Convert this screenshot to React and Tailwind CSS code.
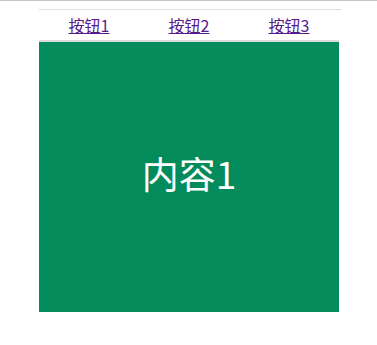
import React from 'react';

const tabs = ['按钮1', '按钮2', '按钮3'];

export default function App() {
  return (
    <div className="min-h-[345px] bg-white" style={{ fontFamily: '"Microsoft YaHei", "Noto Sans CJK SC", sans-serif' }}>
      {/* top rule */}
      <div className="h-px bg-[#c4c4c4]" />

      <div className="ml-[39px] mt-2 w-[302px] border-t border-[#dddddd]">
        {/* Tabs */}
        <div className="grid grid-cols-3 w-[300px]">
          {tabs.map((t) => (
            <a
              key={t}
              href="#"
              className="h-[30px] leading-[30px] text-center text-base text-[#551a8b] underline"
            >
              {t}
            </a>
          ))}
        </div>

        {/* Content panel */}
        <div className="w-[300px] h-[272px] border-t-2 border-[#dddddd] bg-[#038b5b] flex items-center justify-center">
          <span className="text-[37px] text-white leading-none pb-2">内容1</span>
        </div>
      </div>
    </div>
  );
}
